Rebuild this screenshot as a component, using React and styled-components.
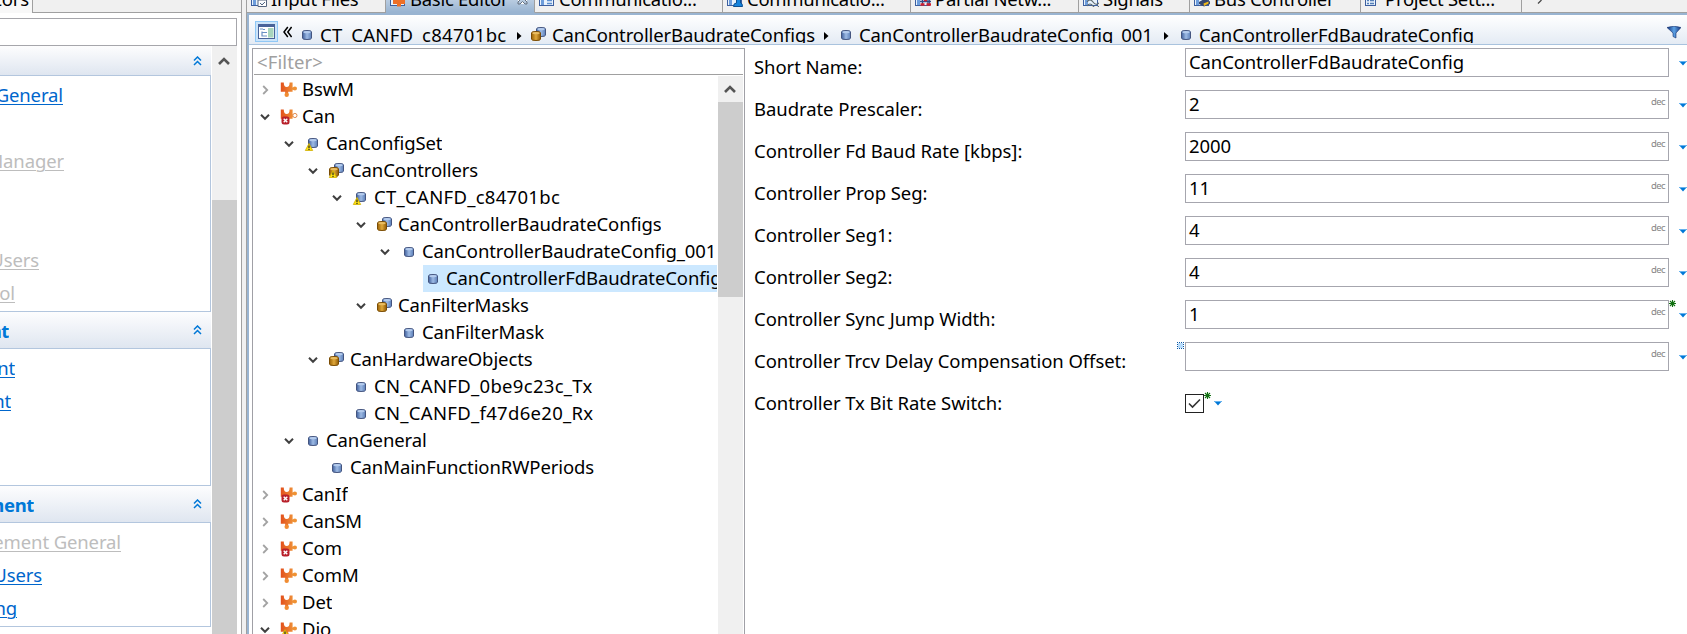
import React from "react";
import styled, { createGlobalStyle, css } from "styled-components";

const GlobalStyle = createGlobalStyle`
  *, *::before, *::after { box-sizing: border-box; }
  html, body { margin: 0; height: 634px; overflow: hidden; background: #fff; }
  body {
    font-family: "Noto Sans", "Open Sans", sans-serif;
    font-size: 18.5px;
    letter-spacing: -0.12px;
    color: #000;
    white-space: nowrap;
  }
  svg { display: block; flex: none; }
`;

/* ---------- window frame ---------- */

const Window = styled.div`
  display: flex;
  width: 1687px;
  height: 634px;
  overflow: hidden;
`;

const Sash = styled.div`
  flex: none;
  width: 6px;
  background: #f0f0f0;
  border-left: 1px solid #a0a0a0;
  border-right: 1px solid #a0a0a0;
`;

/* ---------- left editors list ---------- */

const SidePane = styled.aside`
  flex: none;
  display: flex;
  flex-direction: column;
  width: 241px;
  background: #fff;
`;

const SideTabs = styled.div`
  flex: none;
  display: flex;
  height: 13px;
`;

const SideTab = styled.div`
  flex: none;
  display: flex;
  justify-content: flex-end;
  width: 33px;
  height: 13px;
  padding-right: 3px;
  overflow: hidden;
  border-right: 1px solid #a0a0a0;
  background: #f8f8f8;
  span { flex: none; line-height: 26px; margin-top: -14px; }
`;

const SideTabRest = styled.div`
  flex: 1;
  background: #f0f0f0;
  border-bottom: 1px solid #a0a0a0;
`;

const SideSearch = styled.div`
  flex: none;
  width: 237px;
  height: 28px;
  margin-top: 5px;
  border: 1px solid #a6a6ab;
  border-left: 0;
`;

const SideBody = styled.div`
  flex: 1;
  display: flex;
  min-height: 0;
`;

const Sections = styled.div`
  width: 211px;
  margin-right: 1px;
`;

const SectionHead = styled.div`
  display: flex;
  align-items: center;
  height: ${(p) => p.$h}px;
  padding-right: 9px;
  background: linear-gradient(#fdfdfe, #dfe6f0);
  border-bottom: 1px solid #b3c6de;
  color: #0078d7;
  font-weight: 700;
  letter-spacing: -0.35px;
`;

const ClippedEnd = styled.div`
  flex: none;
  display: flex;
  justify-content: flex-end;
  width: ${(p) => p.$end}px;
  overflow: hidden;
  span { flex: none; }
`;

const HeadSpacer = styled.div`
  flex: 1;
`;

const SectionBody = styled.div`
  height: ${(p) => p.$h}px;
  padding-top: 2px;
  border-right: 1px solid #b3c6de;
  border-bottom: 1px solid #b3c6de;
`;

const LinkRow = styled.div`
  height: 33px;
  line-height: 33px;
  color: ${(p) => (p.$disabled ? "#bdbdbd" : "#0066cc")};
  span { text-decoration: underline; text-decoration-thickness: 1px; text-underline-offset: 2px; }
`;

/* ---------- scroll bars ---------- */

const ScrollBar = styled.div`
  flex: none;
  display: flex;
  flex-direction: column;
  width: ${(p) => p.$w}px;
  background: #f0f0f0;
`;

const ScrollArrow = styled.div`
  flex: none;
  display: flex;
  align-items: center;
  justify-content: center;
  height: ${(p) => p.$h}px;
  padding-right: 1px;
`;

const ScrollThumb = styled.div`
  height: ${(p) => p.$h}px;
  margin-top: ${(p) => p.$gap || 0}px;
  background: #cdcdcd;
`;

/* ---------- main editor ---------- */

const Main = styled.main`
  flex: 1;
  display: flex;
  flex-direction: column;
  min-width: 0;
`;

const TabBar = styled.div`
  flex: none;
  display: flex;
  height: 15px;
  background: #f0f0f0;
  border-bottom: 2px solid #99b4d1;
  letter-spacing: -0.28px;
`;

const Tab = styled.div`
  flex: none;
  display: flex;
  width: ${(p) => p.$w}px;
  height: 13px;
  padding-left: 4px;
  overflow: hidden;
  border-right: 1px solid #a0a0a0;
  border-bottom: 1px solid #a0a0a0;
  svg { margin-top: -9px; }
  ${(p) =>
    p.$active &&
    css`
      background: linear-gradient(#b9cce1, #99b4d1);
      border-bottom-color: #99b4d1;
    `}
`;

const TabLabel = styled.span`
  flex: none;
  line-height: 26px;
  margin: -14px 0 0 4px;
`;

const CloseSlot = styled.div`
  margin-left: 9px;
`;

const TabOverflow = styled.div`
  flex: 1;
  height: 13px;
  padding-left: 14px;
  border-bottom: 1px solid #a0a0a0;
`;

const Content = styled.div`
  flex: 1;
  display: flex;
  flex-direction: column;
  min-height: 0;
  border-left: 2px solid #99b4d1;
`;

const Breadcrumb = styled.div`
  flex: none;
  display: flex;
  height: 30px;
  padding-left: 6px;
  overflow: hidden;
  background: linear-gradient(#fff, #e4ebf4);
  border-bottom: 1px solid #a9c3de;
`;

const ToggleButton = styled.div`
  flex: none;
  display: flex;
  align-items: center;
  justify-content: center;
  width: 23px;
  height: 21px;
  margin-top: 6px;
  border: 1px solid #90c8f6;
  background: #cce4f9;
`;

const Collapse = styled.div`
  flex: none;
  width: 19px;
  padding: 11px 0 0 5px;
`;

const Crumb = styled.div`
  flex: none;
  display: flex;
  width: ${(p) => p.$w}px;
  svg { margin-top: 11px; }
`;

const CrumbIcon = styled.div`
  flex: none;
  width: 22px;
  margin-right: 1px;
`;

const CrumbLabel = styled.span`
  flex: none;
  height: 28px;
  line-height: 40px;
  overflow: hidden;
  width: ${(p) => p.$w}px;
  letter-spacing: ${(p) => p.$track || -0.12}px;
`;

const ArrowSlot = styled.div`
  padding-top: 5px;
`;

const FunnelSlot = styled.div`
  margin: 11px 6px 0 auto;
`;

const Split = styled.div`
  flex: 1;
  display: flex;
  min-height: 0;
  padding: 3px 0 0 3px;
`;

/* ---------- tree ---------- */

const TreePanel = styled.section`
  flex: none;
  display: flex;
  flex-direction: column;
  width: 493px;
  border: 1px solid #a0a0a6;
  border-bottom: 0;
`;

const FilterBox = styled.div`
  flex: none;
  height: 26px;
  margin: 0 1px 1px;
  padding-left: 3px;
  line-height: 26px;
  border-bottom: 1px solid #a0a0a0;
  color: #a0a0a0;
  letter-spacing: 0.1px;
`;

const TreeBody = styled.div`
  flex: 1;
  display: flex;
  min-height: 0;
  padding-right: 1px;
`;

const TreeRows = styled.div`
  flex: 1;
  min-width: 0;
  overflow: hidden;
`;

const TreeRow = styled.div`
  display: flex;
  height: 27px;
  padding-left: ${(p) => p.$level * 24}px;
`;

const Twisty = styled.div`
  flex: none;
  display: flex;
  align-items: center;
  justify-content: center;
  width: 26px;
  padding-right: 3px;
`;

const TreeLabel = styled.div`
  display: flex;
  align-items: center;
  min-width: 0;
  overflow: hidden;
  margin-right: 1px;
  ${(p) => p.$selected && "background: #cce8ff; flex: 1;"}
  svg { margin-right: 3px; }
`;

const TreeText = styled.span`
  height: 27px;
  line-height: 25px;
  letter-spacing: ${(p) => p.$track || -0.1}px;
`;

/* ---------- form ---------- */

const Form = styled.section`
  flex: 1;
  padding-left: 9px;
`;

const FormRow = styled.div`
  display: flex;
  height: 42px;
`;

const FieldLabel = styled.label`
  flex: none;
  width: 423px;
  height: 29px;
  margin-top: 4px;
  line-height: 29px;
  letter-spacing: -0.06px;
`;

const MarkSlot = styled.div`
  flex: none;
  width: 8px;
`;

const Field = styled.div`
  flex: none;
  display: flex;
  justify-content: space-between;
  width: 484px;
  height: 29px;
  padding: 0 3px;
  line-height: 25px;
  border: 1px solid #a6a6ae;
`;

const Unit = styled.span`
  margin-left: auto;
  font-size: 9.5px;
  line-height: 22px;
  letter-spacing: -0.6px;
  color: #858585;
`;

const AfterField = styled.div`
  flex: none;
  width: 10px;
`;

const MenuArrow = styled.div`
  padding-top: ${(p) => p.$top}px;
`;

const CheckBox = styled.div`
  flex: none;
  display: flex;
  align-items: center;
  justify-content: center;
  width: 19px;
  height: 19px;
  margin-top: 10px;
  border: 1px solid #222;
`;

const CheckMark = styled.div`
  width: 10px;
  padding-top: 8px;
`;

/* ---------- icons ---------- */

const Svg = ({ w, h, children }) => (
  <svg width={w} height={h} viewBox={`0 0 ${w} ${h}`} fill="none">
    {children}
  </svg>
);

const HiddenSvg = styled.svg`
  position: absolute;
`;

const Defs = () => (
  <HiddenSvg width="0" height="0">
    <defs>
      <linearGradient id="cylBlue">
        <stop offset="0" stopColor="#3f5f9c" />
        <stop offset="0.5" stopColor="#9dbae4" />
        <stop offset="1" stopColor="#5c7fb8" />
      </linearGradient>
      <linearGradient id="cylGold">
        <stop offset="0" stopColor="#9a6206" />
        <stop offset="0.5" stopColor="#e0a83a" />
        <stop offset="1" stopColor="#8f5a05" />
      </linearGradient>
      <linearGradient id="puzzle">
        <stop offset="0" stopColor="#e2501c" />
        <stop offset="1" stopColor="#f0953a" />
      </linearGradient>
      <linearGradient id="funnel">
        <stop offset="0" stopColor="#0d2f7a" />
        <stop offset="0.5" stopColor="#5da3e6" />
        <stop offset="1" stopColor="#14357e" />
      </linearGradient>
    </defs>
  </HiddenSvg>
);

const Cyl = ({ x, y, gold }) => (
  <g transform={`translate(${x} ${y})`}>
    <path
      d="M.5 1.8Q.5.5 5 .5T9.500 1.800V8.200Q9.500 9.500 5 9.500T.5 8.200Z"
      fill={gold ? "url(#cylGold)" : "url(#cylBlue)"}
      stroke={gold ? "#7a4c04" : "#45557f"}
    />
    <ellipse cx="5" cy="2.200" rx="3.600" ry="1.100" fill={gold ? "#e9bd62" : "#b4cbed"} />
  </g>
);

const Warning = ({ x, y }) => (
  <g transform={`translate(${x} ${y})`}>
    <path d="M4 .5 7.700 7.500H.3Z" fill="#ffe312" stroke="#cfae00" strokeWidth="0.800" />
    <path d="M4 2.500V5M4 5.800V7" stroke="#222" strokeWidth="1.200" />
  </g>
);

const ErrorMark = ({ x, y }) => (
  <g transform={`translate(${x} ${y})`}>
    <rect width="8" height="8" rx="2.500" fill="#b8202a" />
    <path d="M2.200 2.200 5.800 5.800M5.800 2.200 2.200 5.800" stroke="#fff" strokeWidth="1.400" />
  </g>
);

const Puzzle = ({ hollow }) => (
  <g>
    <path
      d="M1.800 1.500H4.800Q4.800 6 7.700 6T10.600 1.500H13.600V6.500H15V8.700H13.600V10.700H9.200V12.500H6.200V10.700H1.800Z"
      fill="url(#puzzle)"
    />
    <circle cx="7.700" cy="13.800" r="2.200" fill="#f08c32" />
    <circle
      cx="15.900"
      cy="7.500"
      r="2.100"
      fill={hollow ? "#fff" : "#ef9234"}
      stroke={hollow ? "#e08a50" : "none"}
    />
  </g>
);

const NodeIcon = ({ kind }) => (
  <Svg w={20} h={18}>
    {kind.startsWith("puzzle") && <Puzzle hollow={kind === "puzzle-error-hollow"} />}
    {kind.startsWith("puzzle-error") && <ErrorMark x={2.5} y={8.5} />}
    {kind === "puzzle-warn" && <Warning x={2} y={8} />}
    {kind === "cyl" && <Cyl x={5} y={4} />}
    {kind === "cyl-warn" && (
      <>
        <Cyl x={5} y={3} />
        <Warning x={2} y={8} />
      </>
    )}
    {kind.startsWith("group") && (
      <>
        <Cyl x={7} y={1} />
        <Cyl x={2} y={5} gold />
      </>
    )}
    {kind === "group-warn" && <Warning x={2} y={8} />}
  </Svg>
);

const TwistyIcon = ({ open }) =>
  open ? (
    <Svg w={10} h={8}>
      <path d="M1 1.800 5 5.800 9 1.800" stroke="#404040" strokeWidth="2" />
    </Svg>
  ) : (
    <Svg w={10} h={10}>
      <path d="M3.200 1 7.200 5 3.200 9" stroke="#a3a3a3" strokeWidth="1.800" />
    </Svg>
  );

const ScrollUp = () => (
  <Svg w={12} h={10}>
    <path d="M1 8 6 3 11 8" stroke="#555" strokeWidth="2.600" />
  </Svg>
);

const DoubleUp = () => (
  <Svg w={9} h={10}>
    <path d="M1 4.500 4.500 1 8 4.500M1 9 4.500 5.500 8 9" stroke="#0078d7" strokeWidth="1.500" />
  </Svg>
);

const DoubleLeft = () => (
  <Svg w={9} h={12}>
    <path d="M4.800 1 1 6 4.800 11M8.600 1 4.800 6 8.600 11" stroke="#000" strokeWidth="1.500" />
  </Svg>
);

const TreeViewIcon = () => (
  <Svg w={17} h={15}>
    <rect x="0.500" y="0.500" width="16" height="14" fill="#fff" stroke="#48639a" />
    <path d="M1 2H16" stroke="#48639a" strokeWidth="2" />
    <rect x="10" y="4" width="5.500" height="9.500" fill="#a8d5bd" />
    <path d="M2 5H5M4 7.500V12.500M4 8.500H9M4 12H9M5 5.500H7" stroke="#6a91c4" strokeWidth="1.200" />
  </Svg>
);

const CrumbArrow = () => (
  <Svg w={5} h={10}>
    <path d="M0 1 4.500 5 0 9Z" fill="#000" />
  </Svg>
);

const Funnel = () => (
  <Svg w={14} h={13}>
    <path d="M0 1.500Q7-1 14 1.500L9 7V12L6 10.500V7Z" fill="url(#funnel)" stroke="#15316f" strokeWidth="0.600" />
  </Svg>
);

const DropArrow = () => (
  <Svg w={8} h={5}>
    <path d="M0 0H8L4 4.600Z" fill="#0078d7" />
    <path d="M0 .5H8" stroke="#66b2ee" />
  </Svg>
);

const Star = () => (
  <Svg w={7} h={7}>
    <path d="M3.500 0V7M0 3.500H7M1 1 6 6M6 1 1 6" stroke="#117011" strokeWidth="1.100" />
  </Svg>
);

const UnsetMark = () => (
  <Svg w={7} h={7}>
    <rect x="1" y="1" width="5" height="5" fill="#b9dcfa" />
    <path
      d="M0 .5H7M0 6.500H7M.5 0V7M6.500 0V7"
      stroke="#0b57a4"
      strokeDasharray="1 1"
    />
  </Svg>
);

const Tick = () => (
  <Svg w={13} h={11}>
    <path d="M1 5.500 4.500 9 12 1.500" stroke="#333" strokeWidth="1.600" />
  </Svg>
);

const CloseIcon = () => (
  <Svg w={11} h={14}>
    <path
      d="M1 13V11L4 8 1 5M10 13V11L7 8 10 5M1 13H3L5.500 10.500 8 13H10"
      fill="#fff"
      stroke="#66717f"
    />
  </Svg>
);

const TabIcon = ({ kind }) => (
  <Svg w={16} h={16}>
    <rect x="0.500" y="1.500" width={kind === "list" ? 10 : 14} height="13" fill="#e8f2fc" stroke="#3c5f9f" />
    {kind !== "puzzle" && kind !== "list" && <path d="M3.500 2V14" stroke="#6d9ddb" strokeWidth="3" />}
    {kind === "input" && <path d="M7 15.500V9H15.500V15.500ZM9 12 11 14 14 11" fill="#fff" stroke="#55657f" />}
    {kind === "puzzle" && <path d="M3 5H6V9H9V5H12V9H15V13H11V15.500H7V13H3Z" fill="#ee7028" />}
    {kind === "doc" && <path d="M8 9.500H13M8 12.500H13" stroke="#5c8fd0" strokeWidth="1.500" />}
    {kind === "user" && (
      <path d="M6.500 15.500Q6.500 12 9.500 12V8.500H13.500V12Q15.500 12 15.500 15.500Z" fill="#1583dc" stroke="#0c4f91" />
    )}
    {kind === "net" && (
      <>
        <path d="M5 10.500H16M7.500 8V13M13 8V13" stroke="#334a85" strokeWidth="1.300" />
        <path d="M5.500 13.500H9.500M11.500 13.500H16M9 9H12" stroke="#cf2130" strokeWidth="2.400" />
      </>
    )}
    {kind === "signal" && <path d="M4 11Q7 7 10 11T16 12M4 15Q7 11 10 15T16 15" stroke="#5f6c70" strokeWidth="1.200" />}
    {kind === "bus" && (
      <>
        <path d="M5 11 11 7.500 16 10.500V13L10 15.500 5 13Z" fill="#34466f" />
        <path d="M9.500 12.500 14.500 10.500V12.500L10 15Z" fill="#f0b818" />
      </>
    )}
    {kind === "list" && <path d="M2 9.500H4M5 9.500H9M2 12.500H4M5 12.500H9" stroke="#547fb8" strokeWidth="1.300" />}
  </Svg>
);

/* ---------- data ---------- */

const sections = [
  {
    headHeight: 30,
    bodyHeight: 236,
    links: [
      { text: "General", end: 63 },
      null,
      { text: "Manager", end: 64, disabled: true },
      null,
      null,
      { text: "Users", end: 39, disabled: true },
      { text: "ol", end: 15, disabled: true },
    ],
  },
  {
    title: "nt",
    titleEnd: 9,
    headHeight: 37,
    bodyHeight: 137,
    links: [
      { text: "nt", end: 15 },
      { text: "nt", end: 11 },
    ],
  },
  {
    title: "ment",
    titleEnd: 34,
    headHeight: 37,
    bodyHeight: 104,
    links: [
      { text: "ement General", end: 121, disabled: true },
      { text: "Users", end: 42 },
      { text: "ng", end: 17 },
    ],
  },
];

const tabs = [
  { label: "Input Files", icon: "input", w: 139 },
  { label: "Basic Editor", icon: "puzzle", w: 149, active: true },
  { label: "Communicatio...", icon: "doc", w: 188 },
  { label: "Communicatio...", icon: "user", w: 188 },
  { label: "Partial Netw...", icon: "net", w: 168 },
  { label: "Signals", icon: "signal", w: 111 },
  { label: "Bus Controller", icon: "bus", w: 171 },
  { label: "Project Sett...", icon: "list", w: 161 },
];

const crumbs = [
  { label: "CT_CANFD_c84701bc", icon: "cyl", w: 232, labelWidth: 197, track: 0.32 },
  { label: "CanControllerBaudrateConfigs", icon: "group", w: 307, labelWidth: 272 },
  { label: "CanControllerBaudrateConfig_001", icon: "cyl", w: 340, labelWidth: 305 },
  { label: "CanControllerFdBaudrateConfig", icon: "cyl", w: 320, labelWidth: 290 },
];

const tree = [
  { level: 0, state: "closed", icon: "puzzle", text: "BswM" },
  { level: 0, state: "open", icon: "puzzle-error-hollow", text: "Can" },
  { level: 1, state: "open", icon: "cyl-warn", text: "CanConfigSet" },
  { level: 2, state: "open", icon: "group-warn", text: "CanControllers" },
  { level: 3, state: "open", icon: "cyl-warn", text: "CT_CANFD_c84701bc", track: 0.29 },
  { level: 4, state: "open", icon: "group", text: "CanControllerBaudrateConfigs" },
  { level: 5, state: "open", icon: "cyl", text: "CanControllerBaudrateConfig_001" },
  { level: 6, icon: "cyl", text: "CanControllerFdBaudrateConfig", selected: true },
  { level: 4, state: "open", icon: "group", text: "CanFilterMasks" },
  { level: 5, icon: "cyl", text: "CanFilterMask" },
  { level: 2, state: "open", icon: "group", text: "CanHardwareObjects" },
  { level: 3, icon: "cyl", text: "CN_CANFD_0be9c23c_Tx", track: 0.3 },
  { level: 3, icon: "cyl", text: "CN_CANFD_f47d6e20_Rx", track: 0.3 },
  { level: 1, state: "open", icon: "cyl", text: "CanGeneral" },
  { level: 2, icon: "cyl", text: "CanMainFunctionRWPeriods" },
  { level: 0, state: "closed", icon: "puzzle-error", text: "CanIf" },
  { level: 0, state: "closed", icon: "puzzle", text: "CanSM" },
  { level: 0, state: "closed", icon: "puzzle-error", text: "Com" },
  { level: 0, state: "closed", icon: "puzzle", text: "ComM" },
  { level: 0, state: "closed", icon: "puzzle", text: "Det" },
  { level: 0, state: "open", icon: "puzzle-warn", text: "Dio" },
];

const fields = [
  { label: "Short Name:", value: "CanControllerFdBaudrateConfig" },
  { label: "Baudrate Prescaler:", value: "2", dec: true },
  { label: "Controller Fd Baud Rate [kbps]:", value: "2000", dec: true },
  { label: "Controller Prop Seg:", value: "11", dec: true },
  { label: "Controller Seg1:", value: "4", dec: true },
  { label: "Controller Seg2:", value: "4", dec: true },
  { label: "Controller Sync Jump Width:", value: "1", dec: true, star: true },
  { label: "Controller Trcv Delay Compensation Offset:", value: "", dec: true, unset: true },
];

/* ---------- page ---------- */

export default function App() {
  return (
    <Window>
      <GlobalStyle />
      <Defs />
      <SidePane>
        <SideTabs>
          <SideTab><span>tors</span></SideTab>
          <SideTabRest />
        </SideTabs>
        <SideSearch />
        <SideBody>
          <Sections>
            {sections.map((s, i) => (
              <React.Fragment key={i}>
                <SectionHead $h={s.headHeight}>
                  {s.title && <ClippedEnd $end={s.titleEnd}><span>{s.title}</span></ClippedEnd>}
                  <HeadSpacer />
                  <DoubleUp />
                </SectionHead>
                <SectionBody $h={s.bodyHeight}>
                  {s.links.map((l, j) => (
                    <LinkRow key={j} $disabled={l && l.disabled}>
                      {l && <ClippedEnd $end={l.end}><span>{l.text}</span></ClippedEnd>}
                    </LinkRow>
                  ))}
                </SectionBody>
              </React.Fragment>
            ))}
          </Sections>
          <ScrollBar $w={25}>
            <ScrollArrow $h={29}><ScrollUp /></ScrollArrow>
            <ScrollThumb $gap={125} $h={434} />
          </ScrollBar>
        </SideBody>
      </SidePane>
      <Sash />
      <Main>
        <TabBar>
          {tabs.map((t, i) => (
            <Tab key={i} $w={t.w} $active={t.active}>
              <TabIcon kind={t.icon} />
              <TabLabel>{t.label}</TabLabel>
              {t.active && <CloseSlot><CloseIcon /></CloseSlot>}
            </Tab>
          ))}
          <TabOverflow>
            <Svg w={8} h={5}>
              <path d="M5.500 0 2 3.500" stroke="#444" strokeWidth="1.200" />
            </Svg>
          </TabOverflow>
        </TabBar>
        <Content>
          <Breadcrumb>
            <ToggleButton><TreeViewIcon /></ToggleButton>
            <Collapse><DoubleLeft /></Collapse>
            {crumbs.map((c, i) => (
              <Crumb key={i} $w={c.w}>
                <CrumbIcon><NodeIcon kind={c.icon} /></CrumbIcon>
                <CrumbLabel $w={c.labelWidth} $track={c.track}>{c.label}</CrumbLabel>
                {i < crumbs.length - 1 && <ArrowSlot><CrumbArrow /></ArrowSlot>}
              </Crumb>
            ))}
            <FunnelSlot><Funnel /></FunnelSlot>
          </Breadcrumb>
          <Split>
            <TreePanel>
              <FilterBox>&lt;Filter&gt;</FilterBox>
              <TreeBody>
                <TreeRows>
                  {tree.map((n, i) => (
                    <TreeRow key={i} $level={n.level}>
                      <Twisty>{n.state && <TwistyIcon open={n.state === "open"} />}</Twisty>
                      <TreeLabel $selected={n.selected}>
                        <NodeIcon kind={n.icon} />
                        <TreeText $track={n.track}>{n.text}</TreeText>
                      </TreeLabel>
                    </TreeRow>
                  ))}
                </TreeRows>
                <ScrollBar $w={25}>
                  <ScrollArrow $h={26}><ScrollUp /></ScrollArrow>
                  <ScrollThumb $h={195} />
                </ScrollBar>
              </TreeBody>
            </TreePanel>
            <Form>
              {fields.map((f) => (
                <FormRow key={f.label}>
                  <FieldLabel>{f.label}</FieldLabel>
                  <MarkSlot>{f.unset && <UnsetMark />}</MarkSlot>
                  <Field>
                    {f.value}
                    {f.dec && <Unit>dec</Unit>}
                  </Field>
                  <AfterField>{f.star && <Star />}</AfterField>
                  <MenuArrow $top={13}><DropArrow /></MenuArrow>
                </FormRow>
              ))}
              <FormRow>
                <FieldLabel>Controller Tx Bit Rate Switch:</FieldLabel>
                <MarkSlot />
                <CheckBox><Tick /></CheckBox>
                <CheckMark><Star /></CheckMark>
                <MenuArrow $top={17}><DropArrow /></MenuArrow>
              </FormRow>
            </Form>
          </Split>
        </Content>
      </Main>
    </Window>
  );
}
